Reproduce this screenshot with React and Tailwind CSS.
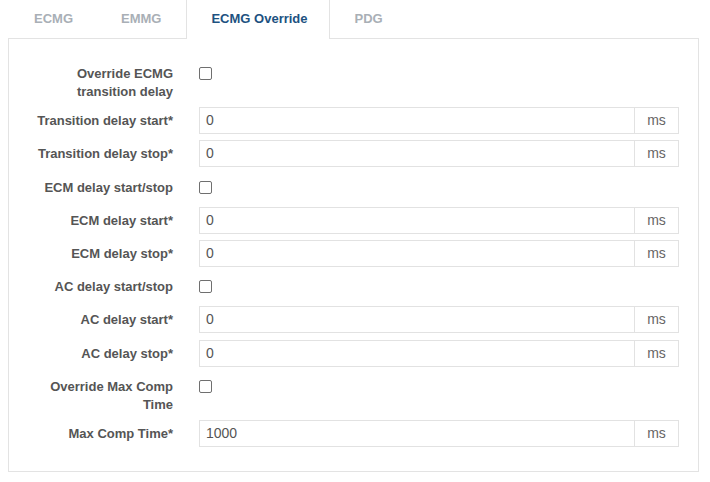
import React from 'react';

const tabs = ['ECMG', 'EMMG', 'ECMG Override', 'PDG'];

const rows = [
  { label: 'Override ECMG transition delay', type: 'check' },
  { label: 'Transition delay start*', type: 'input', value: '0' },
  { label: 'Transition delay stop*', type: 'input', value: '0' },
  { label: 'ECM delay start/stop', type: 'check' },
  { label: 'ECM delay start*', type: 'input', value: '0' },
  { label: 'ECM delay stop*', type: 'input', value: '0' },
  { label: 'AC delay start/stop', type: 'check' },
  { label: 'AC delay start*', type: 'input', value: '0' },
  { label: 'AC delay stop*', type: 'input', value: '0' },
  { label: 'Override Max Comp Time', type: 'check' },
  { label: 'Max Comp Time*', type: 'input', value: '1000' },
];

const FormRow = ({ row }) => (
  <div className="flex items-start">
    <label className="w-[153px] shrink-0 text-right pt-[5px] text-[13px] leading-[18px] font-bold text-[#555]">
      {row.label}
    </label>
    <div className="flex-1 ml-[26px]">
      {row.type === 'check' ? (
        <div className="h-[27px] flex items-center">
          <span className="block w-[13px] h-[13px] border border-[#6f6f6f] rounded-[2px] bg-white" />
        </div>
      ) : (
        <div className="flex h-[27px] border border-[#e2e2e2]">
          <div className="flex-1 flex items-center px-[6px] text-[14px] text-[#555]">
            {row.value}
          </div>
          <div className="w-[44px] border-l border-[#e2e2e2] flex items-center justify-center text-[14px] text-[#666]">
            ms
          </div>
        </div>
      )}
    </div>
  </div>
);

export default function App() {
  return (
    <div className="w-[710px] h-[482px] bg-white font-['Liberation_Sans',Arial,sans-serif]">
      {/* Tabs */}
      <div className="relative z-10 flex gap-[2px] pl-[11px] h-[38px]">
        {tabs.map((t) => {
          const active = t === 'ECMG Override';
          return (
            <div
              key={t}
              className={
                active
                  ? 'h-[39px] pl-[24px] pr-[21px] flex items-center bg-white border-x border-[#e3e3e3] text-[13px] font-bold text-[#1d5281]'
                  : 'h-[38px] px-[23px] flex items-center text-[13px] font-bold text-[#a9afb6]'
              }
            >
              <span className="-mt-[1px]">{t}</span>
            </div>
          );
        })}
      </div>

      {/* Panel */}
      <div className="mx-[8px] w-[691px] h-[434px] border border-[#e3e3e3] pt-[21px] pl-[11px] pr-[19px]">
        <div className="flex flex-col gap-[6.2px]">
          {rows.map((r) => (
            <FormRow key={r.label} row={r} />
          ))}
        </div>
      </div>
    </div>
  );
}
